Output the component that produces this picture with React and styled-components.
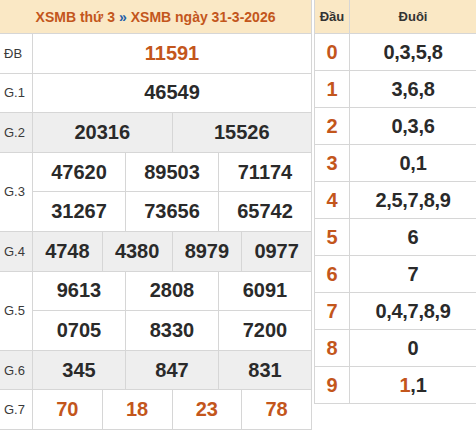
import React from "react";
import styled, { createGlobalStyle } from "styled-components";

const GlobalStyle = createGlobalStyle`
  html, body {
    margin: 0;
    padding: 0;
    background: #ffffff;
  }
  body {
    font-family: "Liberation Sans", Arial, sans-serif;
  }
`;

const prizes = [
  { label: "ĐB", rows: [["11591"]], special: true },
  { label: "G.1", rows: [["46549"]] },
  { label: "G.2", rows: [["20316", "15526"]], shaded: true },
  { label: "G.3", rows: [["47620", "89503", "71174"], ["31267", "73656", "65742"]] },
  { label: "G.4", rows: [["4748", "4380", "8979", "0977"]], shaded: true },
  { label: "G.5", rows: [["9613", "2808", "6091"], ["0705", "8330", "7200"]] },
  { label: "G.6", rows: [["345", "847", "831"]], shaded: true },
  { label: "G.7", rows: [["70", "18", "23", "78"]], special: true },
];

// hot = index of the tail that comes from the special prize (…91)
const loto = [
  { head: "0", tails: ["0", "3", "5", "8"] },
  { head: "1", tails: ["3", "6", "8"] },
  { head: "2", tails: ["0", "3", "6"] },
  { head: "3", tails: ["0", "1"] },
  { head: "4", tails: ["2", "5", "7", "8", "9"] },
  { head: "5", tails: ["6"] },
  { head: "6", tails: ["7"] },
  { head: "7", tails: ["0", "4", "7", "8", "9"] },
  { head: "8", tails: ["0"] },
  { head: "9", tails: ["1", "1"], hot: 0 },
];

export default function App() {
  let rowIndex = 2;
  return (
    <>
      <GlobalStyle />
      <Page>
        <Board>
          <BoardHead>
            XSMB thứ 3 <Arrow>»</Arrow> XSMB ngày 31-3-2026
          </BoardHead>
          {prizes.map((prize) => {
            const start = rowIndex;
            rowIndex += prize.rows.length;
            return (
              <React.Fragment key={prize.label}>
                <Label
                  $shaded={prize.shaded}
                  style={{ gridRow: `${start} / span ${prize.rows.length}` }}
                >
                  {prize.label}
                </Label>
                {prize.rows.map((nums, r) =>
                  nums.map((n, i) => (
                    <Num
                      key={`${r}-${i}`}
                      $shaded={prize.shaded}
                      $special={prize.special}
                      style={{ gridColumn: `span ${12 / nums.length}` }}
                    >
                      {n}
                    </Num>
                  ))
                )}
              </React.Fragment>
            );
          })}
        </Board>
        <Loto>
          <LotoHead>Đầu</LotoHead>
          <LotoHead>Đuôi</LotoHead>
          {loto.map(({ head, tails, hot }) => (
            <React.Fragment key={head}>
              <Head>{head}</Head>
              <Tails>
                {tails.map((t, i) => (
                  <React.Fragment key={i}>
                    {i > 0 && ","}
                    {i === hot ? <Hot>{t}</Hot> : t}
                  </React.Fragment>
                ))}
              </Tails>
            </React.Fragment>
          ))}
        </Loto>
      </Page>
    </>
  );
}

const Page = styled.div`
  display: flex;
  align-items: flex-start;
  gap: 2px;
  width: 476px;
  height: 430px;
  overflow: hidden;
`;

const Board = styled.div`
  display: grid;
  grid-template-columns: 32px repeat(12, 1fr);
  grid-template-rows: 33px repeat(10, 1fr);
  gap: 1px;
  width: 312px;
  height: 430px;
  box-sizing: border-box;
  padding: 0 1px 1px 0;
  background: #d6d6d6;
  flex-shrink: 0;
`;

const BoardHead = styled.div`
  grid-column: 1 / -1;
  display: flex;
  align-items: center;
  justify-content: center;
  gap: 4px;
  background: #fae8c5;
  color: #c3561c;
  font-size: 14px;
  font-weight: 700;
`;

const Arrow = styled.span`
  color: #1f5fa8;
`;

const Label = styled.div`
  display: flex;
  align-items: center;
  padding-left: 4px;
  background: ${(p) => (p.$shaded ? "#eeeeee" : "#ffffff")};
  color: #3a3a3a;
  font-size: 13px;
`;

const Num = styled.div`
  display: flex;
  align-items: center;
  justify-content: center;
  background: ${(p) => (p.$shaded ? "#eeeeee" : "#ffffff")};
  color: ${(p) => (p.$special ? "#c3561c" : "#2a2a2a")};
  font-size: 20px;
  font-weight: 700;
`;

const Loto = styled.div`
  display: grid;
  grid-template-columns: 34px 1fr;
  grid-template-rows: 33px repeat(10, 36px);
  gap: 1px;
  flex: 1;
  padding: 0 0 1px 1px;
  background: #d6d6d6;
`;

const LotoHead = styled.div`
  display: flex;
  align-items: center;
  justify-content: center;
  background: #fae8c5;
  color: #333333;
  font-size: 13px;
  font-weight: 700;
`;

const Head = styled.div`
  display: flex;
  align-items: center;
  justify-content: center;
  background: #ffffff;
  color: #c3561c;
  font-size: 20px;
  font-weight: 700;
`;

const Tails = styled(Head)`
  color: #2a2a2a;
  letter-spacing: -0.3px;
`;

const Hot = styled.span`
  color: #c3561c;
`;
